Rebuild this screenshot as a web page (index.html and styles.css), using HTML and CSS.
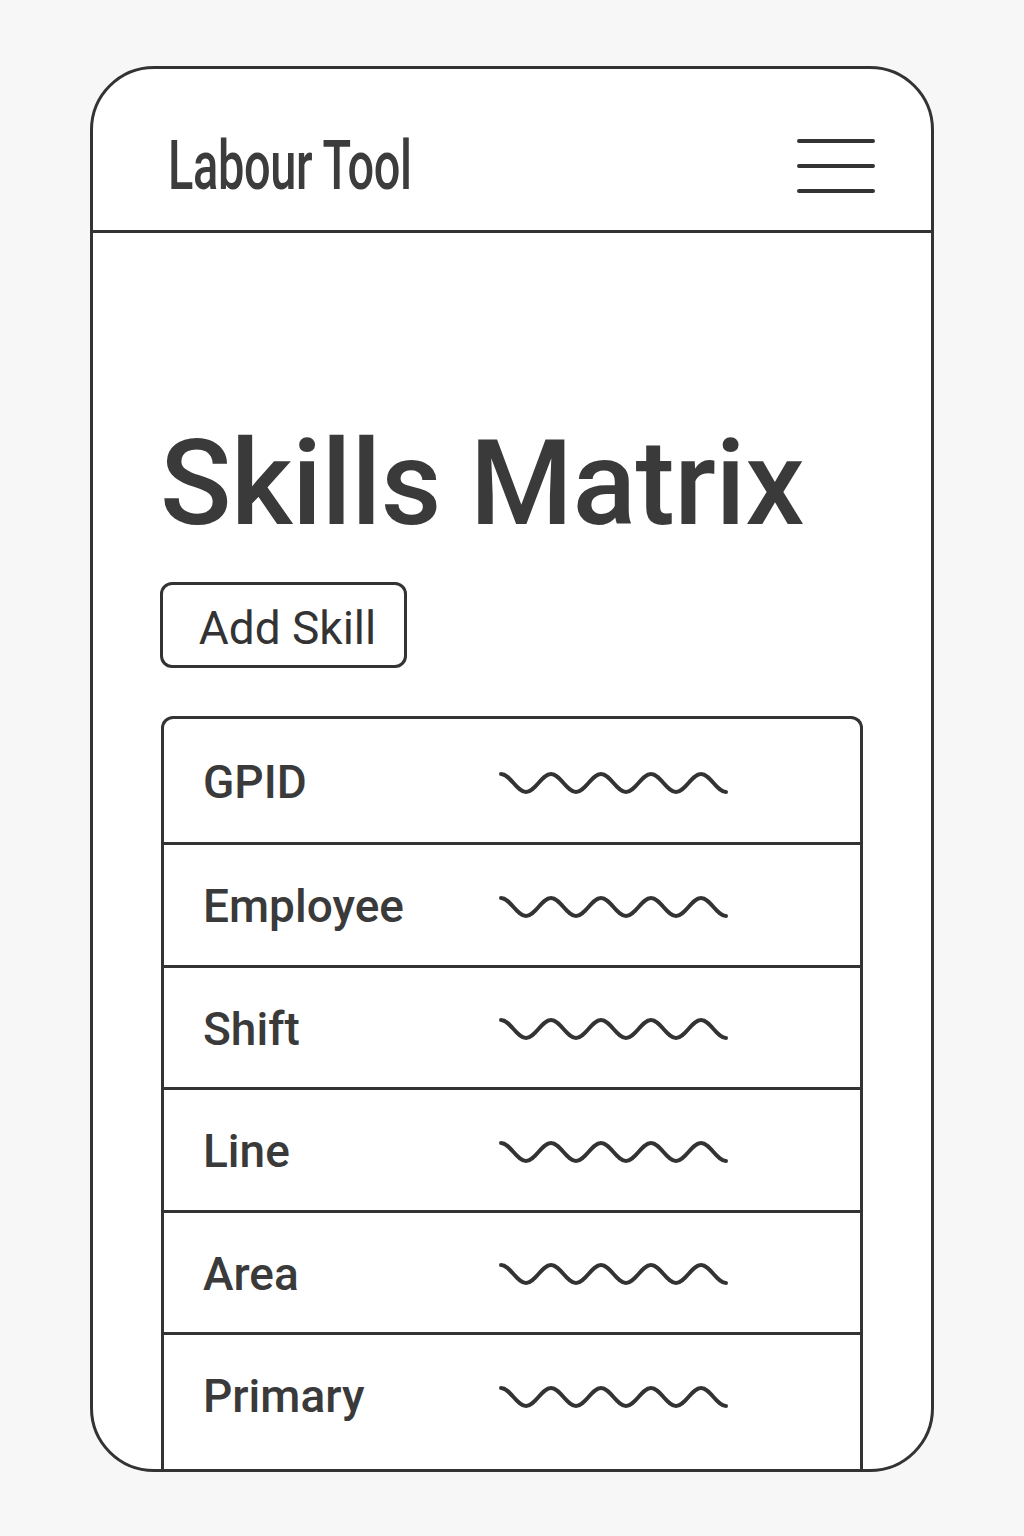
FILE: index.html
```html
<!DOCTYPE html>
<html lang="en">
<head>
<meta charset="utf-8">
<title>Labour Tool – Skills Matrix</title>
<link rel="stylesheet" href="styles.css">
</head>
<body>
<div class="phone">
  <header class="topbar">
    <span class="brand">Labour Tool</span>
    <svg class="menu" width="80" height="54" viewBox="0 0 80 54" aria-label="Menu">
      <path d="M3 2H77M3 27H77M3 52H77" stroke="#333" stroke-width="4" stroke-linecap="round" fill="none"/>
    </svg>
  </header>
  <main class="content">
    <h1 class="title">Skills Matrix</h1>
    <button class="add-btn" type="button">Add Skill</button>
    <div class="matrix">
      <div class="row"><span class="label">GPID</span><svg class="wave" width="230" height="30" viewBox="0 0 230 30"><path d="M2 6C11 6 18 24 27 24S43 6 52 6S68 24 77 24S93 6 102 6S118 24 127 24S143 6 152 6S168 24 177 24S193 6 202 6S218 24 227 24"/></svg></div>
      <div class="row"><span class="label">Employee</span><svg class="wave" width="230" height="30" viewBox="0 0 230 30"><path d="M2 6C11 6 18 24 27 24S43 6 52 6S68 24 77 24S93 6 102 6S118 24 127 24S143 6 152 6S168 24 177 24S193 6 202 6S218 24 227 24"/></svg></div>
      <div class="row"><span class="label">Shift</span><svg class="wave" width="230" height="30" viewBox="0 0 230 30"><path d="M2 6C11 6 18 24 27 24S43 6 52 6S68 24 77 24S93 6 102 6S118 24 127 24S143 6 152 6S168 24 177 24S193 6 202 6S218 24 227 24"/></svg></div>
      <div class="row"><span class="label">Line</span><svg class="wave" width="230" height="30" viewBox="0 0 230 30"><path d="M2 6C11 6 18 24 27 24S43 6 52 6S68 24 77 24S93 6 102 6S118 24 127 24S143 6 152 6S168 24 177 24S193 6 202 6S218 24 227 24"/></svg></div>
      <div class="row"><span class="label">Area</span><svg class="wave" width="230" height="30" viewBox="0 0 230 30"><path d="M2 6C11 6 18 24 27 24S43 6 52 6S68 24 77 24S93 6 102 6S118 24 127 24S143 6 152 6S168 24 177 24S193 6 202 6S218 24 227 24"/></svg></div>
      <div class="row"><span class="label">Primary</span><svg class="wave" width="230" height="30" viewBox="0 0 230 30"><path d="M2 6C11 6 18 24 27 24S43 6 52 6S68 24 77 24S93 6 102 6S118 24 127 24S143 6 152 6S168 24 177 24S193 6 202 6S218 24 227 24"/></svg></div>
    </div>
  </main>
</div>
</body>
</html>
```

FILE: styles.css
```css
* { box-sizing: border-box; }

html, body {
  margin: 0;
  padding: 0;
  background: #f7f7f7;
  font-family: Roboto, "Noto Sans", "Liberation Sans", sans-serif;
  color: #3a3a3a;
}

body {
  padding-top: 66px;
  height: 1536px;
}

.phone {
  margin-left: 90px;
  width: 844px;
  height: 1406px;
  border: 3px solid #333;
  border-radius: 64px;
  background: #fff;
  overflow: hidden;
  display: flex;
  flex-direction: column;
}

.topbar {
  height: 164px;
  flex: none;
  border-bottom: 3px solid #333;
  display: flex;
  align-items: center;
  justify-content: space-between;
  padding: 32px 55px 0 75px;
}

.brand {
  display: inline-block;
  font-size: 68px;
  font-weight: 500;
  line-height: 1;
  color: #3c3c3c;
  transform: scaleX(0.69);
  transform-origin: left center;
  white-space: nowrap;
  letter-spacing: -0.5px;
}

.menu { display: block; flex: none; }

.content {
  flex: 1;
  display: flex;
  flex-direction: column;
  align-items: flex-start;
  padding: 192px 68px 0 67px;
  min-height: 0;
}

.title {
  margin: 0;
  font-size: 118px;
  font-weight: 500;
  line-height: 1;
  color: #3a3a3a;
  letter-spacing: -0.5px;
}

.add-btn {
  margin-top: 39px;
  width: 247px;
  height: 86px;
  border: 3px solid #333;
  border-radius: 12px;
  background: #fff;
  font-family: Roboto, "Noto Sans", sans-serif;
  font-size: 46px;
  font-weight: 400;
  color: #333;
  padding: 5px 0 0 8px;
  display: flex;
  align-items: center;
  justify-content: center;
}

.matrix {
  margin-top: 48px;
  margin-left: 1px;
  width: 702px;
  flex: 1;
  border: 3px solid #333;
  border-bottom: none;
  border-radius: 12px 12px 0 0;
}

.row {
  display: grid;
  grid-template-columns: 296px 230px;
  align-items: center;
  height: 122.5px;
  padding-left: 39px;
  border-top: 3px solid #333;
}

.row:first-child {
  border-top: none;
  height: 123px;
}

.label {
  font-size: 46px;
  font-weight: 500;
  color: #3a3a3a;
  line-height: 1;
  padding-top: 3px;
}

.wave {
  display: block;
  margin-top: 4px;
}

.wave path {
  fill: none;
  stroke: #333;
  stroke-width: 4;
  stroke-linecap: round;
}
```
